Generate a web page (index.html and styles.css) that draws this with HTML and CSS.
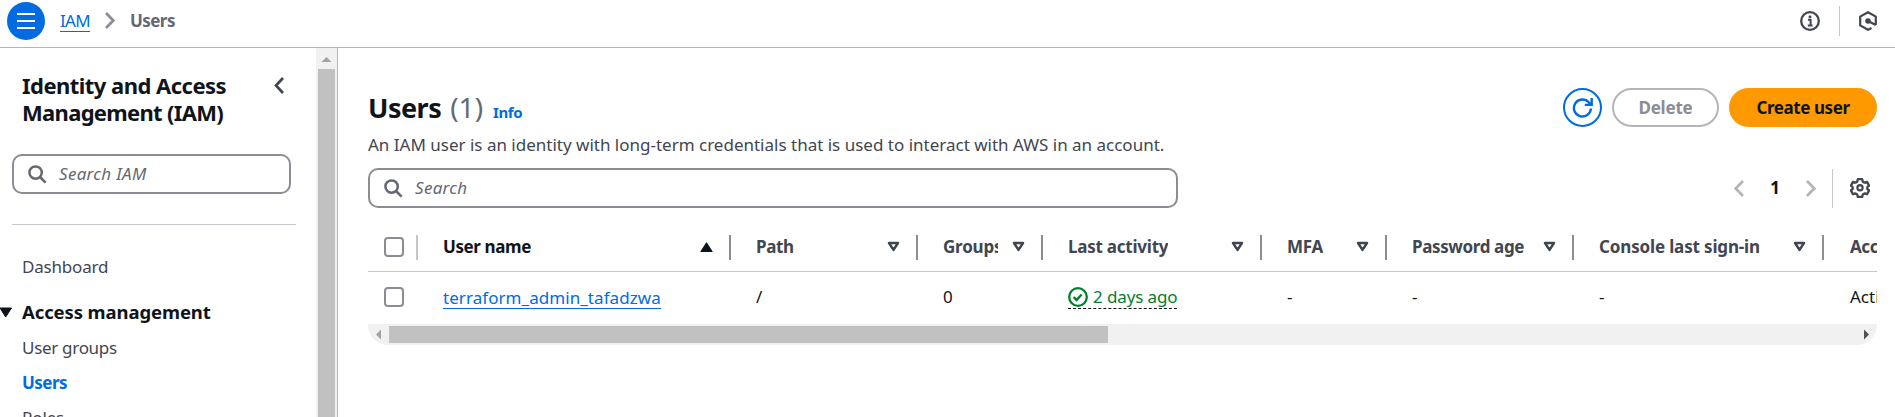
FILE: index.html
```html
<!DOCTYPE html>
<html lang="en">
<head>
<meta charset="utf-8">
<title>Users | IAM</title>
<link rel="stylesheet" href="styles.css">
</head>
<body>
<header class="topbar">
  <button class="menu-btn" aria-label="Menu">
    <svg width="38" height="38" viewBox="0 0 38 38"><path d="M10 12h18M10 19h18M10 26h18" stroke="#fff" stroke-width="2.2"/></svg>
  </button>
  <a class="crumb-link" href="#">IAM</a>
  <svg class="crumb-sep" width="10" height="17" viewBox="0 0 10 17"><path d="M1 1l7.3 7.5L1 16" fill="none" stroke="#8c8c94" stroke-width="2.7"/></svg>
  <span class="crumb-current">Users</span>
  <div class="topbar-tools">
    <svg width="20" height="20" viewBox="0 0 20 20"><circle cx="10" cy="10" r="8.8" fill="none" stroke="#424650" stroke-width="2.3"/><path d="M8 8.8h2.6v5M7.8 14.6h4.8" fill="none" stroke="#424650" stroke-width="2"/><rect x="8.7" y="4.6" width="2.6" height="2.4" fill="#424650"/></svg>
    <span class="tool-divider"></span>
    <svg class="hex" width="18" height="20" viewBox="0 0 18 20"><path d="M12.5 17L9 18.8 1.2 14.4V5.6L9 1.2l7.8 4.4v8.4M9 10l7.8 4" fill="none" stroke="#424650" stroke-width="2.2"/><circle cx="9" cy="10" r="2.8" fill="#424650"/></svg>
  </div>
</header>
<div class="layout">
  <aside class="sidebar">
    <div class="nav">
      <div class="nav-head">
        <h2 class="nav-title"><span class="t1">Identity and Access</span><br><span class="t2">Management (IAM)</span></h2>
        <svg class="nav-collapse" width="10" height="17" viewBox="0 0 10 17"><path d="M9 1L2 8.5 9 16" fill="none" stroke="#424650" stroke-width="2.7"/></svg>
      </div>
      <div class="search nav-search">
        <svg width="19" height="19" viewBox="0 0 19 19"><circle cx="7.6" cy="7.6" r="6.2" fill="none" stroke="#656871" stroke-width="2.5"/><path d="M12 12l5.6 5.6" stroke="#656871" stroke-width="2.5"/></svg>
        <span class="placeholder">Search IAM</span>
      </div>
      <hr class="nav-rule">
      <a class="nav-item dashboard" href="#">Dashboard</a>
      <div class="nav-group">
        <svg width="13" height="11" viewBox="0 0 13 11"><path d="M0 1h11.500L5.700 10z" fill="#0f141a" stroke="#0f141a" stroke-linejoin="round"/></svg>
        <span>Access management</span>
      </div>
      <a class="nav-item groups" href="#">User groups</a>
      <a class="nav-item active" href="#">Users</a>
      <a class="nav-item" href="#">Roles</a>
    </div>
    <div class="vscroll">
      <svg width="21" height="21" viewBox="0 0 21 21"><path d="M10.5 9L15.500 14h-10z" fill="#a3a3a3"/></svg>
      <span class="vthumb"></span>
    </div>
  </aside>
  <main class="main">
    <div class="head-row">
      <h1 class="title">Users</h1><span class="counter">(1)</span><a class="info" href="#">Info</a>
      <div class="actions">
        <button class="btn btn-refresh" aria-label="Refresh"><svg width="22" height="22" viewBox="0 0 22 22"><path d="M18.900 11.500a8.500 8.500 0 1 1-2.200-6.200L19 7.400" fill="none" stroke="#006ce0" stroke-width="2.400"/><path d="M19.700 1v6.900h-6.900" fill="none" stroke="#006ce0" stroke-width="2.400"/></svg></button>
        <button class="btn btn-delete">Delete</button>
        <button class="btn btn-create">Create user</button>
      </div>
    </div>
    <p class="desc">An IAM user is an identity with long-term credentials that is used to interact with AWS in an account.</p>
    <div class="tools">
      <div class="search table-search">
        <svg width="19" height="19" viewBox="0 0 19 19"><circle cx="7.6" cy="7.6" r="6.2" fill="none" stroke="#656871" stroke-width="2.5"/><path d="M12 12l5.6 5.600" stroke="#656871" stroke-width="2.5"/></svg>
        <span class="placeholder">Search</span>
      </div>
      <div class="pager">
        <svg width="10" height="17" viewBox="0 0 10 17"><path d="M9 1L1.700 8.500 9 16" fill="none" stroke="#b4b4bb" stroke-width="2.700"/></svg>
        <span class="page">1</span>
        <svg width="10" height="17" viewBox="0 0 10 17"><path d="M1 1l7.300 7.500L1 16" fill="none" stroke="#b4b4bb" stroke-width="2.700"/></svg>
        <span class="pager-divider"></span>
        <svg width="20" height="20" viewBox="0 0 20 20"><path d="M7.800 1.200h4.400l.6 2.500 1.700 1 2.500-.8 2.100 3.700-1.800 1.500v1.900l1.800 1.500-2.100 3.700-2.500-.8-1.700 1-.6 2.500H7.800l-.6-2.500-1.700-1-2.500.8-2.100-3.700 1.800-1.500V9.100L.9 7.600 3 3.900l2.500.8 1.700-1z" fill="none" stroke="#424650" stroke-width="2.300" stroke-linejoin="round"/><circle cx="10" cy="9.800" r="2.600" fill="none" stroke="#424650" stroke-width="2.200"/></svg>
      </div>
    </div>
    <div class="table">
      <div class="row row-head">
        <div class="cell pick light"><span class="checkbox"></span></div>
        <div class="cell sorted"><span class="label l-name">User name</span><svg class="sort" width="13" height="12" viewBox="0 0 13 12"><path d="M1 10.500h11L6.500 2z" fill="#0f141a" stroke="#0f141a" stroke-width="1.200" stroke-linejoin="round"/></svg></div>
        <div class="cell"><span class="label l-path">Path</span><svg class="sort" width="13" height="12" viewBox="0 0 13 12"><path d="M2 2h9L6.500 8.900z" fill="none" stroke="#424650" stroke-width="2.500" stroke-linejoin="round"/></svg></div>
        <div class="cell"><span class="label l-groups">Groups</span><svg class="sort" width="13" height="12" viewBox="0 0 13 12"><path d="M2 2h9L6.500 8.900z" fill="none" stroke="#424650" stroke-width="2.500" stroke-linejoin="round"/></svg></div>
        <div class="cell"><span class="label l-last">Last activity</span><svg class="sort" width="13" height="12" viewBox="0 0 13 12"><path d="M2 2h9L6.500 8.900z" fill="none" stroke="#424650" stroke-width="2.500" stroke-linejoin="round"/></svg></div>
        <div class="cell"><span class="label l-mfa">MFA</span><svg class="sort" width="13" height="12" viewBox="0 0 13 12"><path d="M2 2h9L6.500 8.900z" fill="none" stroke="#424650" stroke-width="2.500" stroke-linejoin="round"/></svg></div>
        <div class="cell"><span class="label l-pass">Password age</span><svg class="sort" width="13" height="12" viewBox="0 0 13 12"><path d="M2 2h9L6.500 8.900z" fill="none" stroke="#424650" stroke-width="2.500" stroke-linejoin="round"/></svg></div>
        <div class="cell"><span class="label l-console">Console last sign-in</span><svg class="sort" width="13" height="12" viewBox="0 0 13 12"><path d="M2 2h9L6.500 8.900z" fill="none" stroke="#424650" stroke-width="2.500" stroke-linejoin="round"/></svg></div>
        <div class="cell last"><span class="label l-acc">Acc</span></div>
      </div>
      <div class="row row-body">
        <div class="cell pick"><span class="checkbox"></span></div>
        <div class="cell"><a class="user-link" href="#">terraform_admin_tafadzwa</a></div>
        <div class="cell">/</div>
        <div class="cell">0</div>
        <div class="cell"><span class="status"><svg width="20" height="20" viewBox="0 0 20 20"><circle cx="10" cy="10" r="8.800" fill="none" stroke="#00802f" stroke-width="2.300"/><path d="M5.600 10.200l3 2.800 5-5.600" fill="none" stroke="#00802f" stroke-width="2.300"/></svg><span>2 days ago</span></span></div>
        <div class="cell">-</div>
        <div class="cell">-</div>
        <div class="cell">-</div>
        <div class="cell last">Acti</div>
      </div>
      <div class="hscroll">
        <svg width="21" height="21" viewBox="0 0 21 21"><path d="M8 10.500L13 5.500v10z" fill="#a3a3a3"/></svg>
        <span class="hthumb"></span>
        <svg class="right" width="21" height="21" viewBox="0 0 21 21"><path d="M13 10.500L8 5.500v10z" fill="#505050"/></svg>
      </div>
    </div>
  </main>
</div>
</body>
</html>
```
FILE: styles.css
```css
* { box-sizing: border-box; }

body {
  margin: 0;
  height: 417px;
  overflow: hidden;
  background: #fff;
  color: #0f141a;
  font: 17px/24px "Noto Sans", sans-serif;
}

a { text-decoration: none; color: inherit; }
svg { display: block; flex: none; }
button { font: inherit; padding: 0; border: 0; background: none; }

/* Top bar */
.topbar {
  display: flex;
  align-items: center;
  height: 48px;
  padding: 0 18px 6px 7px;
  border-bottom: 1px solid #b4b4bb;
}
.menu-btn { width: 38px; height: 38px; border-radius: 50%; background: #006ce0; }
.crumb-link {
  height: 22px;
  margin: 1px 0 0 15px;
  line-height: 21px;
  letter-spacing: -0.7px;
  color: #006ce0;
  border-bottom: 1px solid #006ce0;
}
.crumb-sep { margin-left: 15px; }
.crumb-current { margin-left: 15px; font-weight: 700; letter-spacing: -0.55px; color: #656871; }
.topbar-tools { display: flex; align-items: center; margin-left: auto; }
.tool-divider { width: 1px; height: 30px; margin: 0 19px; background: #c6c6cd; }

.layout { display: flex; height: 369px; }

/* Side navigation */
.sidebar { display: flex; width: 338px; flex: none; border-right: 1px solid #b4b4bb; overflow: hidden; }
.nav { width: 316px; padding-top: 24px; }
.nav-head { display: flex; height: 82px; padding-left: 22px; }
.nav-title { margin: 0; width: 252px; font-size: 22px; line-height: 27px; }
.t1 { letter-spacing: -0.53px; }
.t2 { letter-spacing: -0.69px; }
.nav-collapse { margin-top: 5px; }
.search {
  display: flex;
  align-items: center;
  height: 40px;
  padding-left: 14px;
  border: 2px solid #8c8c94;
  border-radius: 10px;
}
.placeholder { margin-left: 12px; font-style: italic; letter-spacing: 0.3px; color: #656871; }
.nav-search { width: 279px; margin-left: 12px; }
.nav-rule { width: 284px; height: 1px; margin: 30px 0 0 12px; border: 0; background: #c6c6cd; }
.nav-item { display: block; height: 24px; margin: 11px 0 0 22px; letter-spacing: -0.2px; color: #424650; }
.dashboard { margin-top: 30px; }
.groups { margin-top: 12px; letter-spacing: -0.3px; }
.active { font-weight: 700; letter-spacing: -0.55px; color: #006ce0; }
.nav-group { display: flex; align-items: center; gap: 9px; margin-top: 21px; font-size: 18.5px; font-weight: 700; letter-spacing: -0.1px; }
.vscroll { display: flex; flex-direction: column; align-items: center; width: 21px; background: #f1f1f1; }
.vthumb { width: 17px; flex: 1; background: #c1c1c1; }

/* Main content */
.main { flex: 1; min-width: 0; padding: 40px 18px 0 30px; }
.head-row { display: flex; align-items: baseline; height: 39px; line-height: 38px; }
.title { margin: 0; font-size: 27px; letter-spacing: -0.5px; }
.counter { margin-left: 9px; font-size: 28px; color: #656871; }
.info { margin-left: 10px; font-size: 15px; font-weight: 700; letter-spacing: -0.4px; color: #006ce0; }
.actions { display: flex; gap: 10px; margin-left: auto; align-self: flex-start; }
.btn { height: 39px; border-radius: 20px; font-weight: 700; line-height: 34px; }
.btn-refresh { display: flex; align-items: center; justify-content: center; width: 39px; border: 2px solid #006ce0; }
.btn-delete { width: 107px; border: 2px solid #b4b4bb; letter-spacing: -0.2px; color: #8c8c94; }
.btn-create { width: 148px; background: #ff9900; line-height: 38px; letter-spacing: -0.42px; color: #0f141a; }
.desc { margin: 6px 0 11px; color: #424650; }
.tools { display: flex; justify-content: space-between; }
.table-search { width: 810px; }
.pager { display: flex; align-items: center; padding-right: 7px; }
.page { width: 10px; margin: 0 26px; font-weight: 700; text-align: center; }
.pager-divider { width: 1px; height: 39px; margin: 0 17px 0 16px; background: #c6c6cd; }

/* Users table */
.table { margin-top: 15px; overflow: hidden; }
.row { display: grid; grid-template-columns: 50px 313px 187px 125px 219px 125px 187px 250px 53px; }
.row-head { height: 49px; border-bottom: 1px solid #c6c6cd; font-weight: 700; color: #424650; }
.row-body { height: 52px; padding-bottom: 2px; }
.cell { display: flex; align-items: center; min-width: 0; padding: 0 18px 0 25px; overflow: hidden; white-space: nowrap; }
.row-head .cell { background: linear-gradient(#8c8c94, #8c8c94) right 12px / 2px 25px no-repeat; }
.row-head .light { background-image: linear-gradient(#c6c6cd, #c6c6cd); }
.row-head .last { background: none; }
.row .last { padding: 0 0 0 26px; }
.row .pick { padding: 0 0 1px 16px; }
.sorted { color: #0f141a; }
.label { overflow: hidden; }
.sort { margin-left: auto; }
.checkbox { width: 20px; height: 20px; border: 2px solid #8c8c94; border-radius: 4px; }
.l-name { letter-spacing: -0.4px; }
.l-path { letter-spacing: -0.4px; }
.l-groups { width: 55px; letter-spacing: -0.2px; }
.l-last { letter-spacing: -0.23px; }
.l-mfa { letter-spacing: -0.27px; }
.l-pass { letter-spacing: -0.37px; }
.l-console { letter-spacing: -0.15px; }
.l-acc { letter-spacing: -0.4px; }
.user-link { height: 23px; line-height: 23px; letter-spacing: 0.06px; color: #006ce0; border-bottom: 1px solid #006ce0; }
.status { display: flex; align-items: center; gap: 5px; height: 24px; letter-spacing: -0.12px; line-height: 22px; color: #00802f; border-bottom: 1px dashed #0f141a; }

.hscroll { display: flex; align-items: center; height: 21px; background: #f1f1f1; border-radius: 0 0 20px 20px; overflow: hidden; }
.hthumb { width: 719px; height: 17px; background: #c1c1c1; }
.right { margin-left: auto; }
```
